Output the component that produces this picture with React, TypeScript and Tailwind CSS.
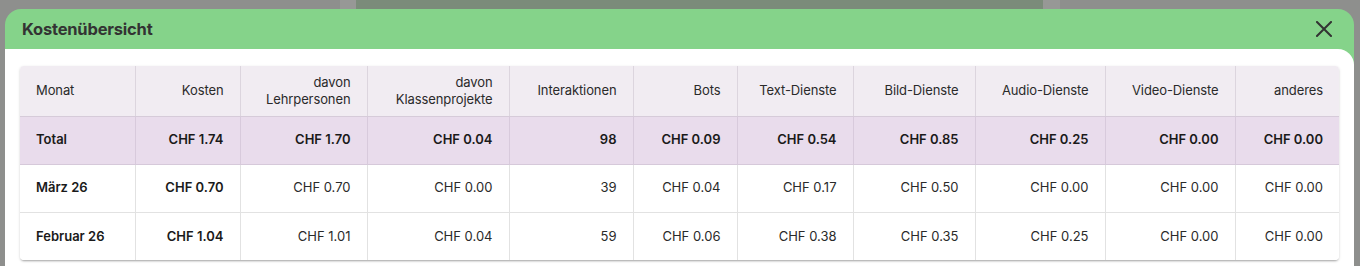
const COLS = [
  { key: "month", label: ["Monat"], w: "w-[115px]", align: "text-left" },
  { key: "cost", label: ["Kosten"], w: "w-[105px]", align: "text-right" },
  { key: "teachers", label: ["davon", "Lehrpersonen"], w: "w-[127px]", align: "text-right" },
  { key: "projects", label: ["davon", "Klassenprojekte"], w: "w-[142px]", align: "text-right" },
  { key: "interactions", label: ["Interaktionen"], w: "w-[124px]", align: "text-right" },
  { key: "bots", label: ["Bots"], w: "w-[104px]", align: "text-right" },
  { key: "text", label: ["Text-Dienste"], w: "w-[116px]", align: "text-right" },
  { key: "image", label: ["Bild-Dienste"], w: "w-[122px]", align: "text-right" },
  { key: "audio", label: ["Audio-Dienste"], w: "w-[130px]", align: "text-right" },
  { key: "video", label: ["Video-Dienste"], w: "w-[130px]", align: "text-right" },
  { key: "other", label: ["anderes"], w: "w-[104px]", align: "text-right" },
];

const TOTAL = ["Total", "CHF 1.74", "CHF 1.70", "CHF 0.04", "98", "CHF 0.09", "CHF 0.54", "CHF 0.85", "CHF 0.25", "CHF 0.00", "CHF 0.00"];

const ROWS = [
  ["März 26", "CHF 0.70", "CHF 0.70", "CHF 0.00", "39", "CHF 0.04", "CHF 0.17", "CHF 0.50", "CHF 0.00", "CHF 0.00", "CHF 0.00"],
  ["Februar 26", "CHF 1.04", "CHF 1.01", "CHF 0.04", "59", "CHF 0.06", "CHF 0.38", "CHF 0.35", "CHF 0.25", "CHF 0.00", "CHF 0.00"],
];

const App = () => {
  return (
    <div
      className="relative h-[266px] w-[1360px] overflow-hidden bg-[#8e8f8d]"
      style={{ fontFamily: "Inter, 'Noto Sans', sans-serif" }}
    >
      {/* page behind the backdrop */}
      <div className="flex h-[9px]">
        <div className="w-[340px] bg-[#8e8f8d]" />
        <div className="w-[16px] bg-[#979896]" />
        <div className="w-[687px] bg-[#7b8b7a]" />
        <div className="w-[17px] bg-[#979896]" />
        <div className="flex-1 bg-[#8e8f8d]" />
      </div>

      <div
        className="absolute left-[5px] top-[9px] w-[1349px] h-[300px] rounded-t-2xl bg-[#85d38a] flex flex-col"
        role="dialog"
        aria-modal="true"
      >
        <div className="h-[40px] flex items-center justify-between pl-[17px] pr-[22px]">
          <h2 className="text-[16.5px] font-bold text-[#333333] tracking-[-0.2px] pt-px">Kostenübersicht</h2>
          <svg width="16" height="16" viewBox="0 0 16 16" className="text-[#333333]">
            <path d="M1 1 L15 15 M15 1 L1 15" stroke="currentColor" strokeWidth="2" strokeLinecap="square" />
          </svg>
        </div>

        <div className="flex-1 bg-white rounded-tr-2xl px-[15px] pt-[17px]">
          <div className="rounded-[4px] bg-white shadow-[0_2px_2px_-1px_rgba(0,0,0,0.25),0_1px_3px_rgba(0,0,0,0.15)] overflow-hidden">
            <table className="w-full table-fixed border-collapse text-[13px] text-[#222222]">
              <colgroup>
                {COLS.map((c) => (
                  <col key={c.key} className={c.w} />
                ))}
              </colgroup>
              <thead>
                <tr className="h-[50px] bg-[#f1ecf2]">
                  {COLS.map((c, i) => (
                    <th
                      key={c.key}
                      className={`${c.align} font-normal leading-[17px] px-4 text-[#2a2a2a] tracking-[-0.1px] border-b border-[#d6cbd9] ${
                        i > 0 ? "border-l border-l-[#dcd5de]" : ""
                      }`}
                    >
                      {c.label.map((l) => (
                        <div key={l}>{l}</div>
                      ))}
                    </th>
                  ))}
                </tr>
              </thead>
              <tbody>
                <tr className="h-[48px] bg-[#e9dcec]">
                  {TOTAL.map((v, i) => (
                    <td
                      key={i}
                      className={`${COLS[i].align} px-4 font-semibold text-[#1a1a1a] border-b border-[#d6c9da] ${
                        i > 0 ? "border-l border-l-[#d8cadc]" : ""
                      }`}
                    >
                      {v}
                    </td>
                  ))}
                </tr>
                {ROWS.map((row, r) => (
                  <tr key={row[0]} className="h-[48px] bg-white">
                    {row.map((v, i) => (
                      <td
                        key={i}
                        className={`${COLS[i].align} px-4 ${
                          i < 2 ? "font-semibold text-[#1a1a1a]" : "text-[#2a2a2a]"
                        } ${r === 0 ? "border-b border-[#e2e2e2]" : ""} ${
                          i > 0 ? "border-l border-l-[#e2e2e2]" : ""
                        }`}
                      >
                        {v}
                      </td>
                    ))}
                  </tr>
                ))}
              </tbody>
            </table>
          </div>
        </div>
      </div>
    </div>
  );
};

export default App;
